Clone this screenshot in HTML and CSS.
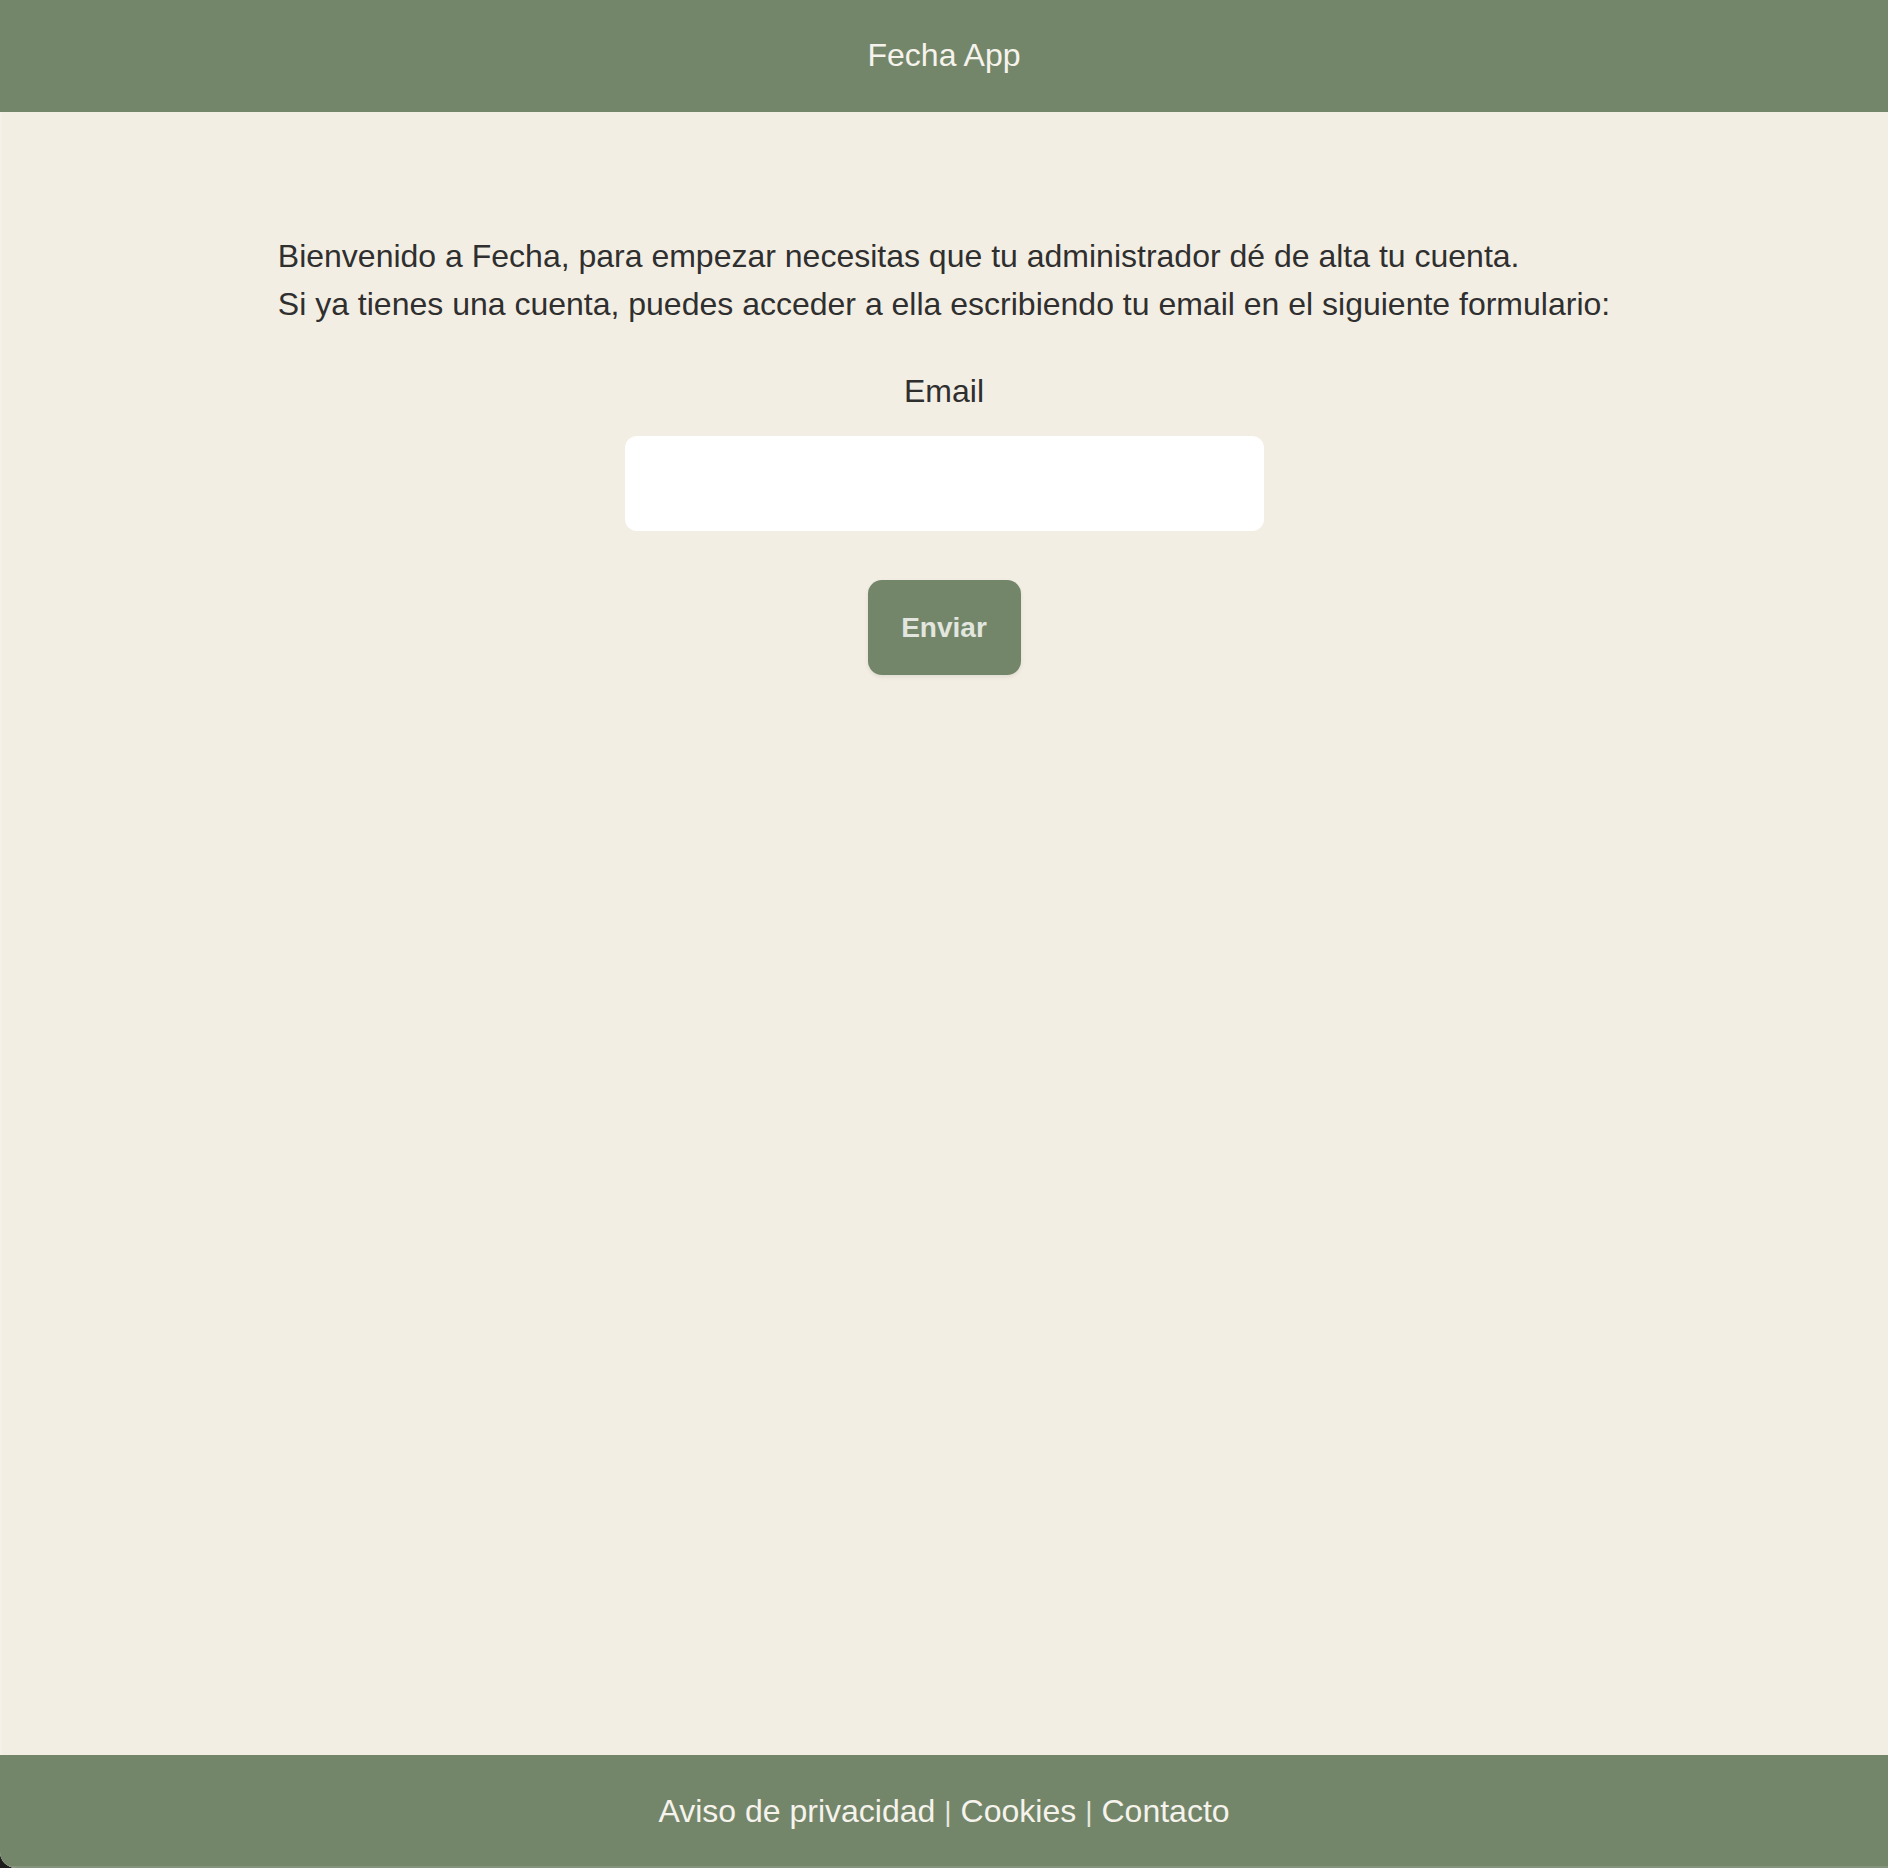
FILE: index.html
```html
<!DOCTYPE html>
<html lang="es">
<head>
<meta charset="utf-8">
<title>Fecha App</title>
<link rel="stylesheet" href="styles.css">
</head>
<body>
<div class="app">
  <header class="topbar">
    <span class="brand">Fecha App</span>
  </header>
  <main class="content">
    <div class="intro">
      <p>Bienvenido a Fecha, para empezar necesitas que tu administrador dé de alta tu cuenta.</p>
      <p>Si ya tienes una cuenta, puedes acceder a ella escribiendo tu email en el siguiente formulario:</p>
    </div>
    <form class="login">
      <label class="label" for="email">Email</label>
      <input class="field" id="email" type="email">
      <button class="submit" type="button">Enviar</button>
    </form>
  </main>
  <footer class="footer">
    <span>Aviso de privacidad</span><span class="sep">|</span><span>Cookies</span><span class="sep">|</span><span>Contacto</span>
  </footer>
</div>
</body>
</html>
```
FILE: styles.css
```css
html, body {
  margin: 0;
  padding: 0;
  height: 100%;
}
html {
  background: #1c1c1c;
}
body {
  font-family: "Liberation Sans", Arial, sans-serif;
  color: #2f2f2f;
}
.app {
  min-height: 100vh;
  display: flex;
  flex-direction: column;
  background: #f3eee3;
  border-bottom-left-radius: 16px;
  overflow: hidden;
  box-shadow: inset 2px 0 0 rgba(255,255,255,0.18);
}
.topbar {
  height: 112px;
  background: #73866a;
  display: flex;
  align-items: center;
  justify-content: center;
  color: #f6f3ec;
  font-size: 32px;
}
.brand {
  margin-top: -2px;
}
.content {
  flex: 1;
  display: flex;
  flex-direction: column;
  align-items: center;
  padding-top: 120px;
}
.intro p {
  margin: 0;
  font-size: 32px;
  line-height: 48px;
}
.login {
  display: flex;
  flex-direction: column;
  align-items: center;
  margin-top: 43px;
}
.label {
  font-size: 32px;
  line-height: 40px;
}
.field {
  margin-top: 25px;
  width: 639px;
  height: 95px;
  box-sizing: border-box;
  border: none;
  border-radius: 12px;
  background: #ffffff;
  font-family: inherit;
  font-size: 28px;
  padding: 0 20px;
  outline: none;
}
.submit {
  margin-top: 49px;
  width: 153px;
  height: 95px;
  border: none;
  border-radius: 14px;
  background: #73866a;
  color: #e2e6de;
  font-family: inherit;
  font-weight: bold;
  font-size: 28px;
  box-shadow: 0 2px 4px rgba(0,0,0,0.08);
  cursor: pointer;
}
.footer {
  height: 113px;
  background: #73866a;
  color: #f6f3ec;
  display: flex;
  align-items: center;
  justify-content: center;
  gap: 9px;
  font-size: 32px;
  box-shadow: inset 0 -2px 0 rgba(255,255,255,0.12);
}
.sep {
  font-size: 28px;
  color: #e4e8df;
}
```
